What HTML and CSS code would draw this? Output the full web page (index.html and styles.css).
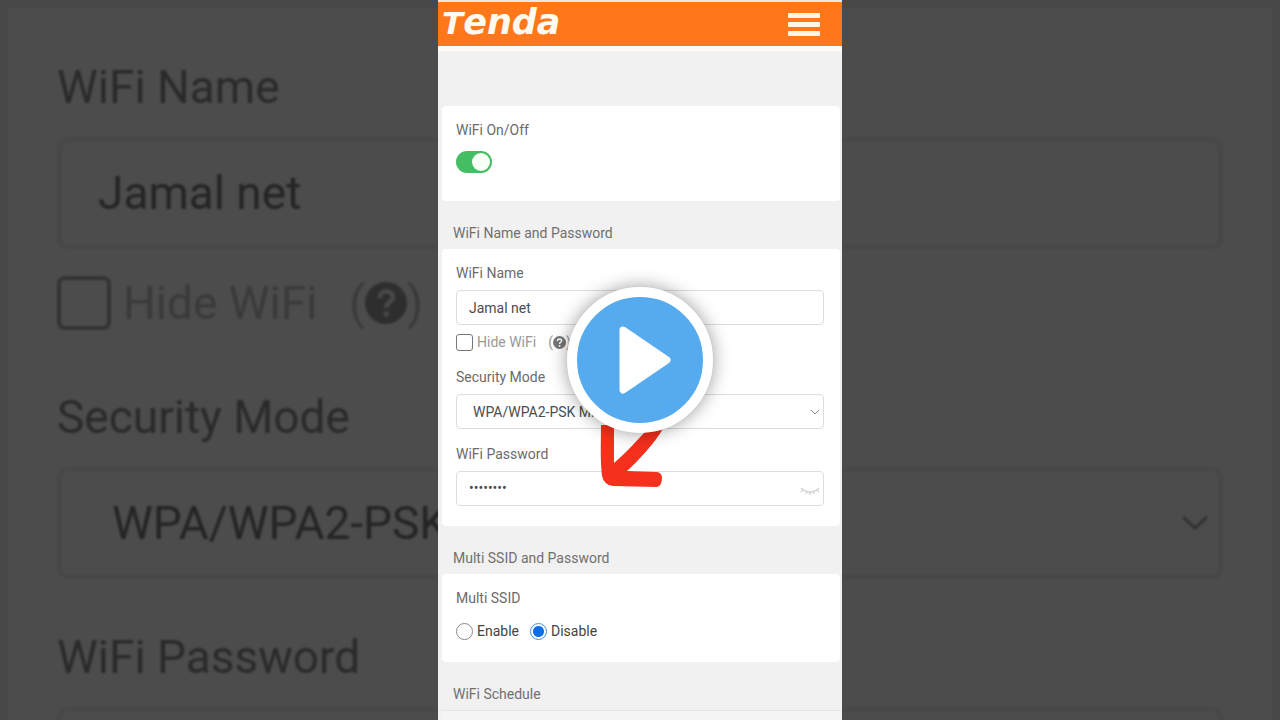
FILE: index.html
```
<!DOCTYPE html>
<html lang="en">
<head>
<meta charset="utf-8">
<meta name="viewport" content="width=device-width, initial-scale=1">
<title>Tenda - WiFi Settings</title>
<link rel="stylesheet" href="styles.css">
</head>
<body>
<main class="stage">

	<!-- enlarged dark copy behind the video -->
	<div class="backdrop" aria-hidden="true">
		<div class="big-panel">
			<label class="big-label" for="bgName">WiFi Name</label>
			<input class="big-input" id="bgName" type="text" value="Jamal net" tabindex="-1">
			<div class="big-check">
				<input type="checkbox" id="bgHide" tabindex="-1">
				<label for="bgHide">Hide WiFi</label>
				<span class="big-help">(<svg viewBox="0 0 16 16"><circle cx="8" cy="8" r="8" fill="#2e2e2e"/><path d="M5.600 6.200c0-3.600 5-3.300 5-.4 0 1.900-2.500 1.900-2.500 4M8.100 11.200v1.900" fill="none" stroke="#484848" stroke-width="1.800"/></svg>)</span>
			</div>
			<label class="big-label" for="bgMode">Security Mode</label>
			<div class="big-select">
				<select class="big-input" id="bgMode" tabindex="-1"><option>WPA/WPA2-PSK Mixed</option></select>
				<svg class="big-chevron" viewBox="0 0 28 16"><path d="M2 2l12 11L26 2" fill="none" stroke="#303030" stroke-width="3"/></svg>
			</div>
			<label class="big-label" for="bgPass">WiFi Password</label>
			<input class="big-input" id="bgPass" type="password" tabindex="-1">
		</div>
	</div>

	<div class="phone">
		<header class="topbar">
			<span class="logo"><span class="logo-t">T</span>enda</span>
			<button class="menu-btn" type="button" aria-label="Menu"><i></i><i></i><i></i></button>
		</header>

		<form class="page">
			<section class="card card-first">
				<label class="label" for="wifiOn">WiFi On/Off</label>
				<input class="switch" type="checkbox" id="wifiOn" checked>
			</section>

			<h2 class="group-title">WiFi Name and Password</h2>
			<section class="card card-wifi">
				<label class="label" for="wifiName">WiFi Name</label>
				<input class="input" id="wifiName" type="text" value="Jamal net">
				<div class="check-row">
					<input type="checkbox" id="hideWifi">
					<label for="hideWifi">Hide WiFi</label>
					<span class="help">(<svg viewBox="0 0 16 16"><circle cx="8" cy="8" r="8" fill="#777"/><path d="M5.600 6.200c0-3.600 5-3.300 5-.4 0 1.900-2.500 1.900-2.500 4M8.100 11.200v1.900" fill="none" stroke="#fff" stroke-width="1.800"/></svg>)</span>
				</div>

				<label class="label" for="secMode">Security Mode</label>
				<div class="field">
					<select class="input select" id="secMode"><option>WPA/WPA2-PSK Mixed</option></select>
					<svg class="chevron" viewBox="0 0 10 6"><path d="M1 1l4 4 4-4" fill="none" stroke="#888"/></svg>
				</div>

				<label class="label label-next" for="wifiPass">WiFi Password</label>
				<div class="field">
					<input class="input password" id="wifiPass" type="password" value="12345678">
					<svg class="eye" viewBox="0 0 20 10"><path d="M1 2q9 8 18 0M3 4L1 6M7 6L6 8M10 6v3M13 6l1 2M17 4l2 2" fill="none" stroke="#d5d5d5" stroke-width="1.500"/></svg>
				</div>
			</section>

			<h2 class="group-title">Multi SSID and Password</h2>
			<section class="card card-ssid">
				<div class="label" id="ssidLabel">Multi SSID</div>
				<div class="radio-row" role="radiogroup" aria-labelledby="ssidLabel">
					<input type="radio" name="ssid" id="ssidOn"><label for="ssidOn">Enable</label>
					<input type="radio" name="ssid" id="ssidOff" checked><label for="ssidOff">Disable</label>
				</div>
			</section>

			<h2 class="group-title">WiFi Schedule</h2>
			<section class="card card-schedule"></section>
		</form>

		<svg class="arrow" viewBox="0 0 64 66"><path d="M2 2L15 2 15 40C30 27 40 15 49 6L65 4C56 20 41 36 28 48L57 49Q62 49 63 54 63 63 58 64L14 63Q5 62 3 53C1 35 2 18 2 2Z" fill="#f5301c"/></svg>
	</div>

	<button class="play" type="button" aria-label="Play video">
		<svg viewBox="0 0 54 70"><path d="M5 5L49 35 5 65Z" fill="#fff" stroke="#fff" stroke-width="7" stroke-linejoin="round"/></svg>
	</button>
</main>
</body>
</html>
```
FILE: styles.css
```
* {
	box-sizing: border-box;
}

body {
	margin: 0;
	font-family: Roboto, "Liberation Sans", sans-serif;
	font-size: 14px;
	line-height: 20px;
	color: #555;
	background: #484848;
}

input, select, button {
	font: inherit;
	color: inherit;
	margin: 0;
}

.stage {
	position: relative;
	height: 100vh;
	overflow: hidden;
}

/* backdrop */
.backdrop {
	position: absolute;
	inset: 0;
	padding: 8px 8px 0;
	overflow: hidden;
	font-size: 46px;
	line-height: 60px;
	color: #2a2a2a;
	filter: blur(1px);
}

.big-panel {
	padding: 49px;
	background: #4c4c4c;
}

.big-label {
	display: block;
	margin-bottom: 20px;
}

.big-input {
	display: block;
	width: 100%;
	height: 112px;
	padding: 0 36px;
	border: 5px solid #484848;
	border-radius: 10px;
	background: #4c4c4c;
	color: #242424;
	appearance: none;
}

.big-check {
	display: flex;
	align-items: center;
	height: 60px;
	margin: 24px 0 54px;
	color: #3a3a3a;
}

.big-check input {
	width: 54px;
	height: 54px;
	margin-right: 12px;
	border: 4px solid #333;
	border-radius: 8px;
	appearance: none;
}

.big-help {
	display: flex;
	align-items: center;
	margin-left: 32px;
}

.big-help svg {
	width: 42px;
	height: 42px;
}

.big-select {
	position: relative;
	margin-bottom: 48px;
}

.big-select select {
	padding: 0 50px;
}

.big-chevron {
	position: absolute;
	right: 14px;
	top: 48px;
	width: 28px;
	height: 16px;
}

/* phone screen */
.phone {
	position: relative;
	width: min(404px, 100%);
	height: 100%;
	margin: 0 auto;
	overflow: hidden;
	background: #f1f1f1;
}

.topbar {
	display: flex;
	justify-content: space-between;
	align-items: center;
	height: 51px;
	padding: 0 22px 0 4px;
	border-top: 2px solid #e8e8e8;
	border-bottom: 5px solid #fdfaf8;
	background: #fe771b;
}

.logo {
	padding-bottom: 4px;
	font: italic bold 35px/36px "DejaVu Sans", sans-serif;
	color: #fffaf0;
}

.logo-t {
	font-size: 31px;
}

.menu-btn {
	display: flex;
	flex-direction: column;
	gap: 4px;
	width: 32px;
	padding: 0;
	border: 0;
	background: none;
}

.menu-btn i {
	height: 5px;
	border-radius: 1px;
	background: #fff6ea;
}

.page {
	padding: 55px 2px 0 4px;
}

.card {
	padding: 14px;
	border-radius: 4px;
	background: #fff;
}

.card-first {
	padding-bottom: 28px;
}

.card-wifi {
	padding: 14px 16px 20px 14px;
}

.card-ssid {
	padding-bottom: 21px;
}

.card-schedule {
	height: 80px;
	border-top: 1px solid #e4e4e4;
	border-radius: 0;
	background: #f4f4f4;
}

.group-title {
	margin: 0;
	padding: 22px 11px 6px;
	font-size: 14px;
	font-weight: 400;
	color: #707070;
}

.label {
	display: block;
	margin-bottom: 7px;
	color: #6b6b6b;
}

.label-next {
	margin-top: 15px;
}

.input {
	display: block;
	width: 100%;
	height: 35px;
	padding: 0 12px;
	border: 1px solid #ddd;
	border-radius: 4px;
	background: #fff;
	color: #4c4c4c;
	appearance: none;
}

.select {
	padding: 0 16px;
}

.password {
	padding-bottom: 2px;
}

.field {
	position: relative;
}

.chevron {
	position: absolute;
	right: 4px;
	top: 15px;
	width: 10px;
	height: 6px;
}

.eye {
	position: absolute;
	right: 4px;
	top: 15px;
	width: 20px;
	height: 10px;
}

.switch {
	display: block;
	width: 36px;
	height: 22px;
	margin-top: 11px;
	padding: 2px;
	border-radius: 11px;
	background: #45bd62;
	appearance: none;
}

.switch::before {
	content: "";
	display: block;
	width: 18px;
	height: 18px;
	margin-left: 14px;
	border-radius: 50%;
	background: #f7fff7;
}

.check-row {
	display: flex;
	align-items: center;
	margin: 7px 0 15px;
	color: #999;
}

.check-row input {
	width: 17px;
	height: 17px;
	margin-right: 4px;
	border: 1px solid #777;
	border-radius: 3px;
	appearance: none;
}

.help {
	display: flex;
	align-items: center;
	margin-left: 12px;
}

.help svg {
	width: 13px;
	height: 13px;
}

.radio-row {
	display: flex;
	align-items: center;
	margin-top: 13px;
	color: #444;
}

.radio-row input {
	width: 17px;
	height: 17px;
	margin-right: 4px;
	border: 1px solid #888;
	border-radius: 50%;
	appearance: none;
}

.radio-row input:checked {
	border-color: #3f93dc;
	background: radial-gradient(circle, #0a6fe8 5px, #fff 6px);
}

.radio-row label {
	margin-right: 11px;
}

.arrow {
	position: absolute;
	left: 161px;
	top: 423px;
	width: 64px;
	height: 66px;
}

/* play button over the video */
.play {
	position: absolute;
	left: 50%;
	top: 50%;
	display: flex;
	align-items: center;
	justify-content: center;
	width: 146px;
	height: 146px;
	margin: -73px 0 0 -73px;
	padding: 0 0 0 10px;
	border: 10px solid #fff;
	border-radius: 50%;
	background: #55abee;
	box-shadow: 0 0 18px rgba(0, 0, 0, .4);
}

.play svg {
	width: 54px;
	height: 70px;
}
```
